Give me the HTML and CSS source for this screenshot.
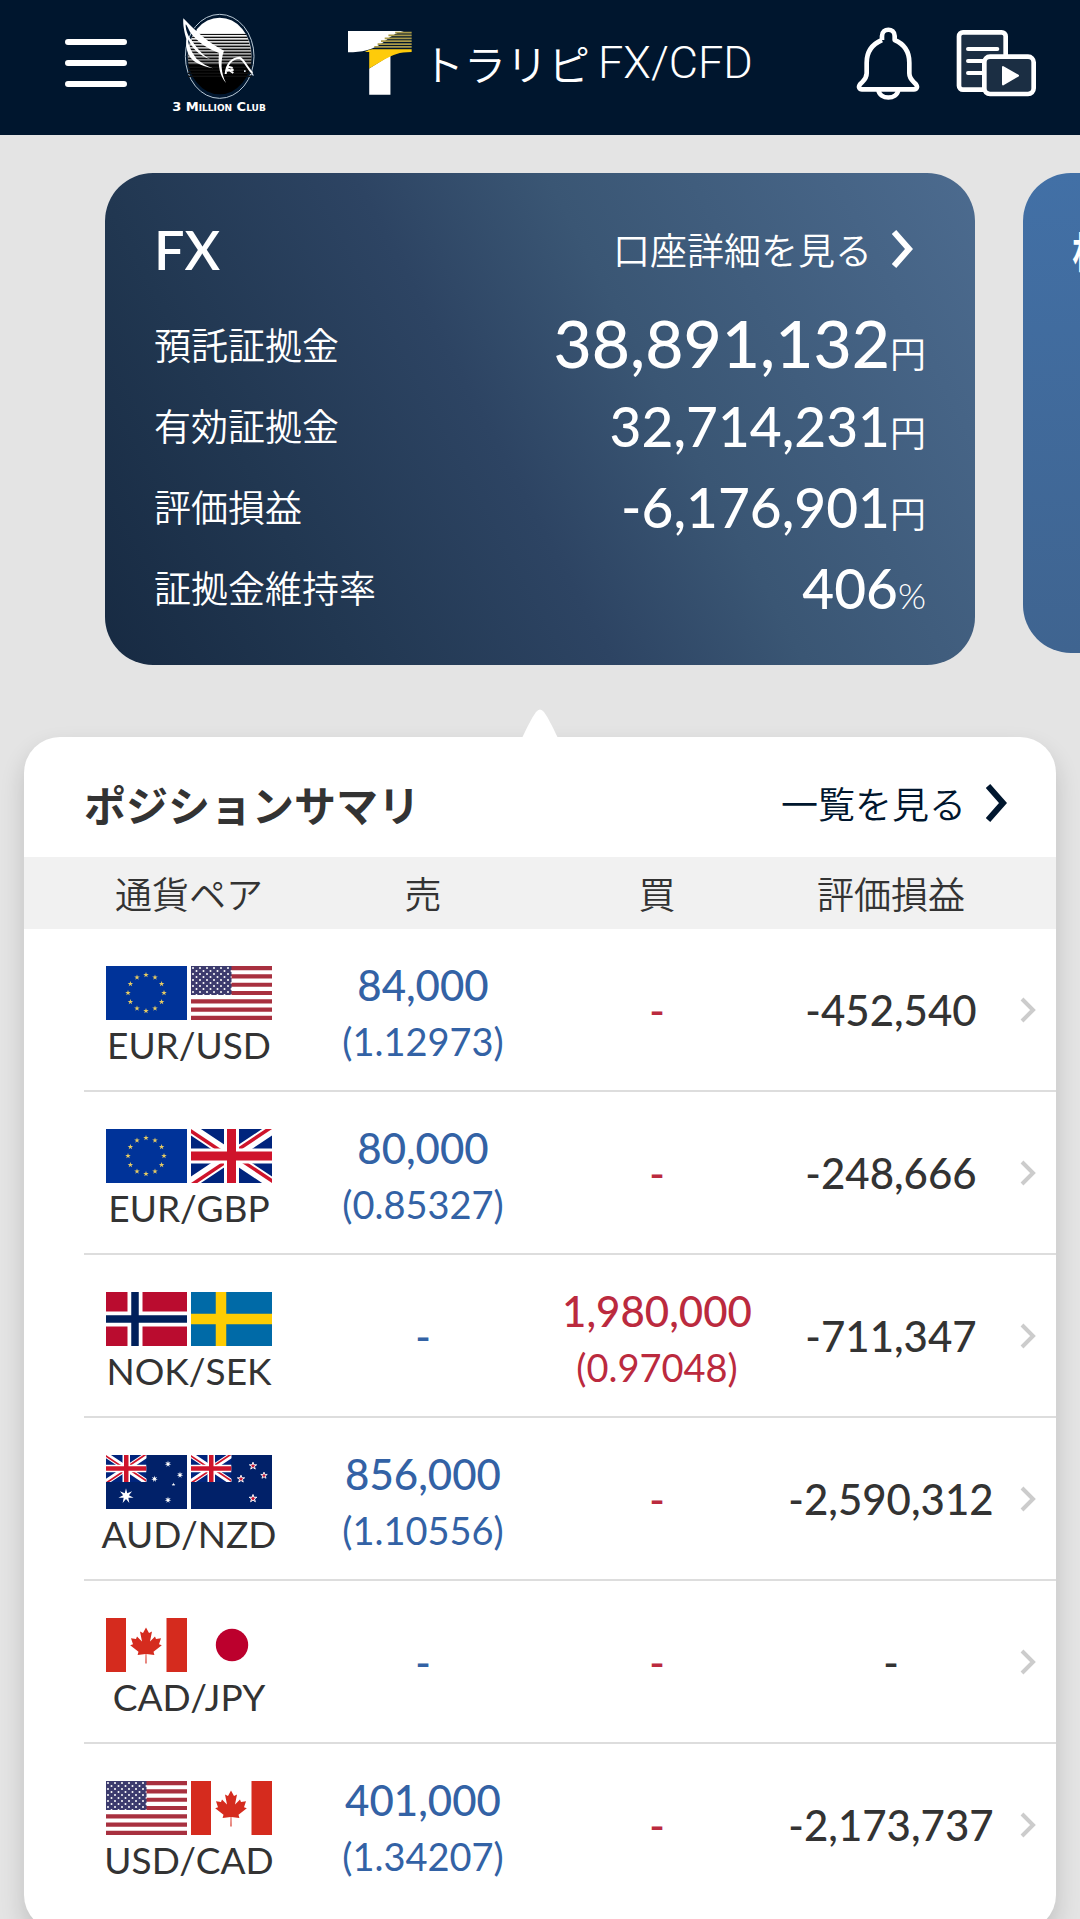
FILE: index.html
```html
<!DOCTYPE html>
<html lang="ja">
<head>
<meta charset="utf-8">
<meta name="viewport" content="width=device-width, initial-scale=1">
<title>トラリピ FX/CFD</title>
<link rel="stylesheet" href="styles.css">
</head>
<body>
<svg class="sprite" aria-hidden="true">
  <defs>
    <path id="star5" d="M0-10 2.3-3.1H9.5L3.7 1.2 5.9 8.1 0 3.8-5.9 8.1-3.7 1.2-9.5-3.1H-2.3Z"/>
    <path id="star7" d="M0-10 1.6-3.4 7.8-6.2 3.7-.9 9.7 2.2 3 2.4 4.3 9 0 3.8-4.3 9-3 2.4-9.7 2.2-3.7-.9-7.8-6.2-1.6-3.4Z"/>
    <pattern id="us-stars" width="7" height="6" patternUnits="userSpaceOnUse">
      <rect width="7" height="6" fill="#3c3b6e"/>
      <circle cx="2" cy="2" r="1" fill="#fff"/><circle cx="5.500" cy="5" r="1" fill="#fff"/>
    </pattern>
    <clipPath id="jack-clip"><path d="M40.500 27H81V54zM40.500 27V54H0zM40.500 27H0V0zM40.500 27V0H81z"/></clipPath>
    <pattern id="emblem-lines" width="10" height="9" patternUnits="userSpaceOnUse">
      <rect y="5" width="10" height="4" fill="#111"/>
    </pattern>
    <linearGradient id="emblem-fade" x1="0" y1="0" x2="0" y2="1">
      <stop offset="0.200" stop-color="#fff"/><stop offset="0.600" stop-color="#777"/><stop offset="0.620" stop-color="#000"/>
    </linearGradient>
  </defs>
  <symbol id="flag-eu" viewBox="0 0 81 54">
    <path fill="#039" d="M0 0h81v54H0z"/>
    <g fill="#e6cb62">
      <use href="#star5" transform="translate(40 9) scale(.29)"/><use href="#star5" transform="translate(49 11.500) scale(.29)"/>
      <use href="#star5" transform="translate(55.600 18) scale(.29)"/><use href="#star5" transform="translate(58 27) scale(.29)"/>
      <use href="#star5" transform="translate(55.600 36) scale(.29)"/><use href="#star5" transform="translate(49 42.500) scale(.29)"/>
      <use href="#star5" transform="translate(40 45) scale(.29)"/><use href="#star5" transform="translate(31 42.500) scale(.29)"/>
      <use href="#star5" transform="translate(24.400 36) scale(.29)"/><use href="#star5" transform="translate(22 27) scale(.29)"/>
      <use href="#star5" transform="translate(24.400 18) scale(.29)"/><use href="#star5" transform="translate(31 11.500) scale(.29)"/>
    </g>
  </symbol>
  <symbol id="flag-us" viewBox="0 0 81 54">
    <path fill="#fff" d="M0 0h81v54H0z"/>
    <path stroke="#a8303f" stroke-width="4.150" d="M0 2.100h81M0 10.400h81M0 18.700h81M0 27h81M0 35.300h81M0 43.600h81M0 51.900h81"/>
    <path fill="url(#us-stars)" d="M0 0h40.500v29H0z"/>
  </symbol>
  <symbol id="flag-gb" viewBox="0 0 81 54">
    <path fill="#00247d" d="M0 0h81v54H0z"/>
    <path stroke="#fff" stroke-width="11" d="m0 0 81 54M81 0 0 54"/>
    <path stroke="#cf142b" stroke-width="7" clip-path="url(#jack-clip)" d="m0 0 81 54M81 0 0 54"/>
    <path stroke="#fff" stroke-width="15" d="M40.500 0v54M0 27h81"/>
    <path stroke="#cf142b" stroke-width="9" d="M40.500 0v54M0 27h81"/>
  </symbol>
  <symbol id="flag-no" viewBox="0 0 81 54">
    <path fill="#ba0c2f" d="M0 0h81v54H0z"/>
    <path stroke="#fff" stroke-width="15" d="M29 0v54M0 27h81"/>
    <path stroke="#00205b" stroke-width="7.500" d="M29 0v54M0 27h81"/>
  </symbol>
  <symbol id="flag-se" viewBox="0 0 81 54">
    <path fill="#006aa7" d="M0 0h81v54H0z"/>
    <path stroke="#fecc02" stroke-width="10.500" d="M30 0v54M0 27h81"/>
  </symbol>
  <symbol id="flag-au" viewBox="0 0 81 54">
    <path fill="#012169" d="M0 0h81v54H0z"/>
    <use href="#flag-gb" width="40.500" height="27"/>
    <g fill="#fff">
      <use href="#star7" transform="translate(20 41) scale(.78)"/><use href="#star7" transform="translate(62 9) scale(.34)"/>
      <use href="#star7" transform="translate(48.500 24) scale(.34)"/><use href="#star7" transform="translate(74 20) scale(.34)"/>
      <use href="#star7" transform="translate(62 45) scale(.34)"/><use href="#star5" transform="translate(67.500 29.500) scale(.2)"/>
    </g>
  </symbol>
  <symbol id="flag-nz" viewBox="0 0 81 54">
    <path fill="#012169" d="M0 0h81v54H0z"/>
    <use href="#flag-gb" width="40.500" height="27"/>
    <g fill="#c8102e" stroke="#fff" stroke-width="2.500">
      <use href="#star5" transform="translate(62 11) scale(.38)"/><use href="#star5" transform="translate(50 24) scale(.38)"/>
      <use href="#star5" transform="translate(73 20.500) scale(.34)"/><use href="#star5" transform="translate(62 43.500) scale(.4)"/>
    </g>
  </symbol>
  <symbol id="flag-ca" viewBox="0 0 81 54">
    <path fill="#fff" d="M0 0h81v54H0z"/>
    <path fill="#d52b1e" d="M0 0h20v54H0zM60.500 0H81v54H60.500z"/>
    <path fill="#d52b1e" d="m40 9.500-3 5.500-3-1.500 2 10-5-5-1 2.500-5-.8 2 6-2.800 1 8.300 6.500-.9 3.300 8-1-.2 9.500h1.200l-.2-9.500 8 1-.9-3.300 8.300-6.500-2.800-1 2-6-5 .8-1-2.500-5 5 2-10-3 1.500z"/>
  </symbol>
  <symbol id="flag-jp" viewBox="0 0 81 54">
    <path fill="#fff" d="M0 0h81v54H0z"/>
    <circle cx="41" cy="27" r="16.200" fill="#bc002d"/>
  </symbol>
  <symbol id="chevron" viewBox="0 0 22 38">
    <path d="m2 2 15 17L2 36" fill="none" stroke="currentColor" stroke-width="6"/>
  </symbol>
  <symbol id="chevron-small" viewBox="0 0 16 26">
    <path d="m2 2 11 11L2 24" fill="none" stroke="currentColor" stroke-width="4"/>
  </symbol>
</svg>

<header class="topbar">
  <button class="icon-button" type="button" aria-label="メニュー">
    <svg width="62" height="48" viewBox="0 0 62 48"><path d="M3 3h56M3 24h56M3 45h56" stroke="#fff" stroke-width="6" stroke-linecap="round"/></svg>
  </button>
  <div class="club">
    <svg width="74" height="87" viewBox="542 42 222 261" aria-hidden="true">
      <ellipse cx="655" cy="172" rx="103" ry="126" fill="#00162e" stroke="#b9c9d6" stroke-width="3"/>
      <ellipse cx="655" cy="171" rx="96" ry="115" fill="url(#emblem-fade)"/>
      <path d="M576 104h158c10 22 16 50 17 82v48H560v-48c2-32 8-60 16-82z" fill="url(#emblem-lines)"/>
      <path d="M546 58 586 94 575 108z" fill="#00162e"/>
      <path fill="#fff" d="M546 58c34 36 80 78 122 97-11 30-10 65 6 97-18-20-25-52-21-90-33-12-64-33-85-60-8-13-14-30-15-24 0 16 8 35 18 46 18 27 34 46 56 57-34-11-56-36-67-61-1 20 16 46 26 60 15 12 30 22 49 28-40-7-64-22-72-39-10-20-9-40-8-49-6-20-11-44-9-62z"/>
      <path d="M673 225c2-28 18-48 42-49 16 10 22 30 38 46M672 216l25-4M676 208l20 14M680 203l14 4" fill="none" stroke="#fff" stroke-width="6"/>
      <path d="m752 218 6 12-8-2zM728 214h5v5h-5z" fill="#d7e0e8"/>
    </svg>
    <span class="club-name">3 Million Club</span>
  </div>
  <div class="brand">
    <svg width="64" height="64" viewBox="54 96 190 190" aria-hidden="true">
      <path fill="#fff" d="M54 96h166c-28 6-43 20-62 34-33 23-62 29-104 29zM117 207l63-39v117h-63z"/>
      <path fill="#fecb0a" d="M104 158c10-6 18-8 22-8h117v8c-38 0-54 8-80 22l-46 27v-49z"/>
      <path d="M194 101h49M174 109h69M163 118h80M152 126h91M142 135h101M132 143h111" stroke="#a99a48" stroke-width="5"/>
    </svg>
    <span class="brand-kana">トラリピ</span>
    <span class="brand-latin">FX/CFD</span>
  </div>
  <div class="actions">
    <button class="icon-button" type="button" aria-label="お知らせ">
      <svg width="64" height="73" viewBox="288 75 192 219">
        <path d="M366 114v-12c0-25 38-25 38 0v12c28 12 44 33 44 68v32c0 18 10 22 20 33 6 8 2 15-6 15H306c-8 0-12-7-6-15 10-11 20-15 20-33v-32c0-35 18-56 46-68M355 264c4 30 56 30 60 0" fill="none" stroke="#fff" stroke-width="14" stroke-linejoin="round"/>
      </svg>
    </button>
    <button class="icon-button" type="button" aria-label="マーケット動画">
      <svg width="81" height="68" viewBox="588 87 243 204">
        <g fill="#1b2e43" stroke="#fff" stroke-width="14">
          <rect x="597" y="97" width="140" height="172" rx="12"/>
          <path d="M624 147h88M624 183h50M624 219h50" stroke-linecap="round" stroke-width="12"/>
          <rect x="673" y="170" width="148" height="112" rx="17"/>
        </g>
        <path fill="#fff" stroke="#fff" stroke-width="6" stroke-linejoin="round" d="m729 201 45 26-45 26z"/>
      </svg>
    </button>
  </div>
</header>

<main>
  <section class="carousel" aria-label="口座">
    <article class="card card-fx">
      <div class="card-head">
        <h2 class="card-title">FX</h2>
        <a class="more" href="#account">口座詳細を見る<svg class="chevron" aria-hidden="true"><use href="#chevron"/></svg></a>
      </div>
      <dl class="figures">
        <div class="figure"><dt>預託証拠金</dt><dd class="figure-large">38,891,132<span class="unit">円</span></dd></div>
        <div class="figure"><dt>有効証拠金</dt><dd>32,714,231<span class="unit">円</span></dd></div>
        <div class="figure"><dt>評価損益</dt><dd>-6,176,901<span class="unit">円</span></dd></div>
        <div class="figure"><dt>証拠金維持率</dt><dd>406<span class="unit">%</span></dd></div>
      </dl>
    </article>
    <article class="card card-cfd">
      <div class="card-head"><h2 class="card-title card-title-kanji">株価指数CFD</h2></div>
    </article>
  </section>

  <section class="panel">
    <svg class="panel-tip" width="36" height="30" viewBox="0 0 36 30" aria-hidden="true"><path fill="#fff" d="M0 30C6 18 9 11 14 4q4-5 8 0c5 7 8 14 14 26z"/></svg>
    <div class="panel-head">
      <h2 class="panel-title">ポジションサマリ</h2>
      <a class="more more-dark" href="#positions">一覧を見る<svg class="chevron" aria-hidden="true"><use href="#chevron"/></svg></a>
    </div>
    <table class="positions">
      <thead>
        <tr><th scope="col">通貨ペア</th><th scope="col">売</th><th scope="col">買</th><th scope="col">評価損益</th></tr>
      </thead>
      <tbody>
        <tr>
          <th class="pair" scope="row"><span class="flags"><svg class="flag"><use href="#flag-eu"/></svg><svg class="flag"><use href="#flag-us"/></svg></span>EUR/USD</th>
          <td class="sell">84,000<span class="rate">(1.12973)</span></td><td class="buy">-</td><td>-452,540</td>
          <td class="go"><a href="#eurusd" aria-label="EUR/USDの詳細"><svg class="chevron-small"><use href="#chevron-small"/></svg></a></td>
        </tr>
        <tr>
          <th class="pair" scope="row"><span class="flags"><svg class="flag"><use href="#flag-eu"/></svg><svg class="flag"><use href="#flag-gb"/></svg></span>EUR/GBP</th>
          <td class="sell">80,000<span class="rate">(0.85327)</span></td><td class="buy">-</td><td>-248,666</td>
          <td class="go"><a href="#eurgbp" aria-label="EUR/GBPの詳細"><svg class="chevron-small"><use href="#chevron-small"/></svg></a></td>
        </tr>
        <tr>
          <th class="pair" scope="row"><span class="flags"><svg class="flag"><use href="#flag-no"/></svg><svg class="flag"><use href="#flag-se"/></svg></span>NOK/SEK</th>
          <td class="sell">-</td><td class="buy">1,980,000<span class="rate">(0.97048)</span></td><td>-711,347</td>
          <td class="go"><a href="#noksek" aria-label="NOK/SEKの詳細"><svg class="chevron-small"><use href="#chevron-small"/></svg></a></td>
        </tr>
        <tr>
          <th class="pair" scope="row"><span class="flags"><svg class="flag"><use href="#flag-au"/></svg><svg class="flag"><use href="#flag-nz"/></svg></span>AUD/NZD</th>
          <td class="sell">856,000<span class="rate">(1.10556)</span></td><td class="buy">-</td><td>-2,590,312</td>
          <td class="go"><a href="#audnzd" aria-label="AUD/NZDの詳細"><svg class="chevron-small"><use href="#chevron-small"/></svg></a></td>
        </tr>
        <tr>
          <th class="pair" scope="row"><span class="flags"><svg class="flag"><use href="#flag-ca"/></svg><svg class="flag"><use href="#flag-jp"/></svg></span>CAD/JPY</th>
          <td class="sell">-</td><td class="buy">-</td><td>-</td>
          <td class="go"><a href="#cadjpy" aria-label="CAD/JPYの詳細"><svg class="chevron-small"><use href="#chevron-small"/></svg></a></td>
        </tr>
        <tr>
          <th class="pair" scope="row"><span class="flags"><svg class="flag"><use href="#flag-us"/></svg><svg class="flag"><use href="#flag-ca"/></svg></span>USD/CAD</th>
          <td class="sell">401,000<span class="rate">(1.34207)</span></td><td class="buy">-</td><td>-2,173,737</td>
          <td class="go"><a href="#usdcad" aria-label="USD/CADの詳細"><svg class="chevron-small"><use href="#chevron-small"/></svg></a></td>
        </tr>
      </tbody>
    </table>
  </section>
</main>
</body>
</html>
```

FILE: styles.css
```css
* { box-sizing: border-box; }

body {
  margin: 0;
  background: #e4e4e4;
  color: #333;
  font-family: Lato, "Noto Sans CJK JP", sans-serif;
  font-size: 36px;
}

h2, dl, dd { margin: 0; }
a { color: inherit; text-decoration: none; }
svg { display: block; flex: none; }
.sprite { position: absolute; width: 0; height: 0; }

/* Top bar */
.topbar {
  display: flex;
  align-items: center;
  height: 135px;
  padding: 0 43px 9px 65px;
  background: #00162e;
  color: #fff;
}
.icon-button { padding: 0; border: 0; background: none; cursor: pointer; }
.club {
  display: flex;
  flex-direction: column;
  align-items: center;
  width: 104px;
  margin-left: 40px;
}
.club-name {
  font: bold 13px/14px "DejaVu Sans", sans-serif;
  font-variant: small-caps;
  white-space: nowrap;
}
.brand {
  display: flex;
  align-items: center;
  margin-left: 77px;
  white-space: nowrap;
}
.brand-kana {
  margin-left: 10px;
  font: 350 42px/64px "Noto Sans CJK JP DemiLight", "Noto Sans CJK JP", sans-serif;
}
.brand-latin { margin-left: 8px; font: 300 45px/64px Roboto, sans-serif; }
.actions { display: flex; align-items: center; gap: 36px; margin-left: auto; }

/* Account cards */
.carousel {
  display: flex;
  align-items: flex-start;
  gap: 48px;
  padding: 38px 105px 0;
  overflow: hidden;
}
.card {
  flex: 0 0 100%;
  padding: 36px 49px;
  border-radius: 48px;
  color: #fff;
}
.card-fx {
  height: 492px;
  background: linear-gradient(62deg, #172a42 0%, #213751 22%, #2d4463 45%, #3a5674 62%, #4c6b8f 100%);
}
.card-cfd { height: 480px; background: linear-gradient(180deg, #4270a6, #3f6490); }
.card-head { display: flex; align-items: center; justify-content: space-between; height: 80px; }
.card-title { font-size: 54px; font-weight: 600; white-space: nowrap; }
.card-title-kanji { font-size: 42px; font-weight: 700; }
.more {
  display: flex;
  align-items: center;
  gap: 20px;
  padding-right: 12px;
  font-family: Lato, "Noto Sans CJK JP DemiLight", "Noto Sans CJK JP", sans-serif;
  font-size: 37px;
  font-weight: 350;
  white-space: nowrap;
}
.chevron { width: 22px; height: 38px; }
.figures { padding-top: 16px; }
.figure { display: flex; align-items: center; justify-content: space-between; height: 81px; }
.figure dt {
  padding-bottom: 3px;
  font-family: "Noto Sans CJK JP DemiLight", "Noto Sans CJK JP", sans-serif;
  font-size: 37px;
  font-weight: 350;
}
.figure dd { padding-top: 6px; font-size: 55px; font-weight: 500; line-height: 81px; }
.figure .figure-large { font-size: 66px; }
.unit {
  font-family: Lato, "Noto Sans CJK JP DemiLight", "Noto Sans CJK JP", sans-serif;
  font-size: 36px;
  font-weight: 350;
}

/* Position summary */
.panel {
  position: relative;
  margin: 72px 24px 24px;
  padding-bottom: 24px;
  border-radius: 36px;
  background: #fff;
  box-shadow: 0 12px 24px rgba(0, 0, 0, 0.16);
}
.panel-tip { position: absolute; top: -29px; left: 50%; margin-left: -18px; }
.panel-head {
  display: flex;
  align-items: center;
  justify-content: space-between;
  height: 120px;
  padding: 12px 36px 0 60px;
}
.panel-title { font-size: 42px; font-weight: 700; }
.more-dark { color: #00162e; }

.positions { display: block; }
.positions tr {
  display: grid;
  grid-template-columns: repeat(4, minmax(0, 1fr)) 48px;
  align-items: center;
  padding-left: 48px;
}
.positions th, .positions td { padding: 0; text-align: center; }
.positions thead, .positions tbody { display: block; }
.positions thead tr { height: 72px; background: #f1f1f1; }
.positions thead th {
  font-family: "Noto Sans CJK JP DemiLight", "Noto Sans CJK JP", sans-serif;
  font-size: 37px;
  font-weight: 350;
}
.positions tbody tr {
  height: 163px;
  background: linear-gradient(#ddd, #ddd) no-repeat 60px 100% / 100% 2px;
}
.positions tbody tr:last-child { background: none; }
.positions td { padding-bottom: 1px; font-size: 42px; font-weight: 500; line-height: 56px; }
.positions td:has(.rate) { padding: 5px 0 0; }
.positions .pair { padding-top: 14px; font-size: 37px; font-weight: 400; line-height: 50px; }
.flags { display: flex; justify-content: center; gap: 4px; }
.flag { width: 81px; height: 54px; }
.sell { color: #3362a5; }
.buy { color: #bb2a3e; }
.rate { display: block; font-size: 38px; font-weight: 400; }
.go { color: #ccc; }
.go a { display: block; padding-left: 12px; }
.chevron-small { width: 16px; height: 26px; }
```
